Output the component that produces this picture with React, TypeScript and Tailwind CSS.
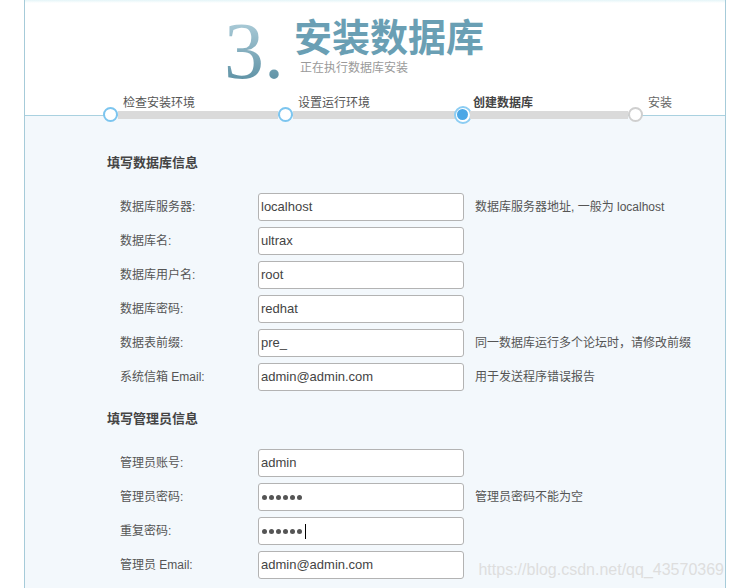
import React from "react";

const font = { fontFamily: '"Liberation Sans", "Noto Sans CJK SC", sans-serif' };

type Row = { label: string; value: string; hint?: string; password?: boolean; cursor?: boolean };

const dbRows: Row[] = [
  { label: "数据库服务器:", value: "localhost", hint: "数据库服务器地址, 一般为 localhost" },
  { label: "数据库名:", value: "ultrax" },
  { label: "数据库用户名:", value: "root" },
  { label: "数据库密码:", value: "redhat" },
  { label: "数据表前缀:", value: "pre_", hint: "同一数据库运行多个论坛时，请修改前缀" },
  { label: "系统信箱 Email:", value: "admin@admin.com", hint: "用于发送程序错误报告" },
];

const adminRows: Row[] = [
  { label: "管理员账号:", value: "admin" },
  { label: "管理员密码:", value: "", password: true, hint: "管理员密码不能为空" },
  { label: "重复密码:", value: "", password: true, cursor: true },
  { label: "管理员 Email:", value: "admin@admin.com" },
];

function FormRow({ row }: { row: Row }) {
  return (
    <div className="flex items-center h-[28px]">
      <div className="w-[138px] pl-[95px] box-content text-[12px] text-[#555]">
        <span className="whitespace-nowrap">{row.label}</span>
      </div>
      <div className="w-[206px] h-[28px] shrink-0 bg-white border border-[#b3b3b3] rounded-[3px] flex items-center pl-[2px] text-[13px] text-[#444]">
        {row.password ? (
          <div className="flex items-center gap-[2px] pl-[1px]">
            {[0, 1, 2, 3, 4, 5].map((i) => (
              <span key={i} className="block w-[5px] h-[5px] rounded-full bg-[#555]" />
            ))}
            {row.cursor && <span className="block w-[1px] h-[15px] bg-black ml-[1px]" />}
          </div>
        ) : (
          <span>{row.value}</span>
        )}
      </div>
      {row.hint && <div className="ml-[11px] text-[12px] text-[#555] whitespace-nowrap">{row.hint}</div>}
    </div>
  );
}

function Circle({ state }: { state: "done" | "active" | "todo" }) {
  if (state === "active") {
    return (
      <div className="w-[15px] h-[15px] shrink-0 flex items-center justify-center">
        <div className="w-[18px] h-[18px] shrink-0 rounded-full border-[2px] border-[#8ccdf3] bg-white flex items-center justify-center">
          <div className="w-[11px] h-[11px] rounded-full bg-[#4aa7e6]" />
        </div>
      </div>
    );
  }
  return (
    <div
      className={
        "w-[15px] h-[15px] shrink-0 rounded-full bg-white border-[2px] " +
        (state === "done" ? "border-[#7cc5ef]" : "border-[#cfcfcf]")
      }
    />
  );
}

export default function App() {
  return (
    <div className="relative w-[733px] h-[588px] overflow-hidden bg-white" style={font}>
      <div className="ml-[24px] w-[702px] border-x border-[#a6cbd9] min-h-[588px]">
        {/* header */}
        <div className="bg-white border-b border-[#a9d1e0]">
          <div className="h-[3px] bg-gradient-to-b from-[#e4f5f8] to-white" />
          <div className="h-[93px] flex">
            <div
              className="ml-[199px] mt-[8px] text-[80px] leading-[80px] bg-gradient-to-b from-[#b9d6e1] to-[#4b8499] bg-clip-text text-transparent"
              style={{ fontFamily: '"Liberation Serif", serif' }}
            >
              3.
            </div>
            <div className="ml-[10px] mt-[12px]">
              <div
                className="text-[38px] leading-[40px] font-bold text-[#6a9fb4] whitespace-nowrap"
                style={{ fontFamily: '"Noto Sans CJK SC", sans-serif' }}
              >
                安装数据库
              </div>
              <div className="mt-[5px] ml-[6px] text-[12px] leading-[16px] text-[#9a9a9a]">正在执行数据库安装</div>
            </div>
          </div>
          <div className="ml-[78px] flex h-[14px] text-[12px] leading-[14px]">
            <div className="w-[175px] shrink-0 pl-[20px] text-[#555]">检查安装环境</div>
            <div className="w-[175px] shrink-0 pl-[20px] text-[#555]">设置运行环境</div>
            <div className="w-[175px] shrink-0 pl-[20px] text-[#444] font-bold">创建数据库</div>
            <div className="w-[100px] shrink-0 pl-[20px] text-[#666]">安装</div>
          </div>
          <div className="relative z-10 ml-[78px] mt-[-3px] mb-[-7px] h-[15px] flex items-center">
            <Circle state="done" />
            <div className="w-[160px] h-[8px] shrink-0 bg-[#dadada]" />
            <Circle state="done" />
            <div className="w-[162px] h-[8px] shrink-0 bg-[#dadada]" />
            <Circle state="active" />
            <div className="w-[158px] h-[8px] shrink-0 bg-[#dadada]" />
            <Circle state="todo" />
          </div>
        </div>

        {/* form */}
        <div className="bg-[#f3f8fc] pt-[37px] pb-[20px] min-h-[480px]">
          <div className="ml-[82px] h-[20px] leading-[20px] text-[13px] font-bold text-[#444]">填写数据库信息</div>
          <div className="mt-[20px] flex flex-col gap-[6px]">
            {dbRows.map((r) => (
              <FormRow key={r.label} row={r} />
            ))}
          </div>
          <div className="mt-[18px] ml-[82px] h-[20px] leading-[20px] text-[13px] font-bold text-[#444]">填写管理员信息</div>
          <div className="mt-[20px] flex flex-col gap-[6px]">
            {adminRows.map((r) => (
              <FormRow key={r.label} row={r} />
            ))}
          </div>
        </div>
      </div>
      <div className="absolute right-[9px] top-[560px] text-[16px] leading-[20px] text-[#dedede] whitespace-nowrap">
        https://blog.csdn.net/qq_43570369
      </div>
    </div>
  );
}
